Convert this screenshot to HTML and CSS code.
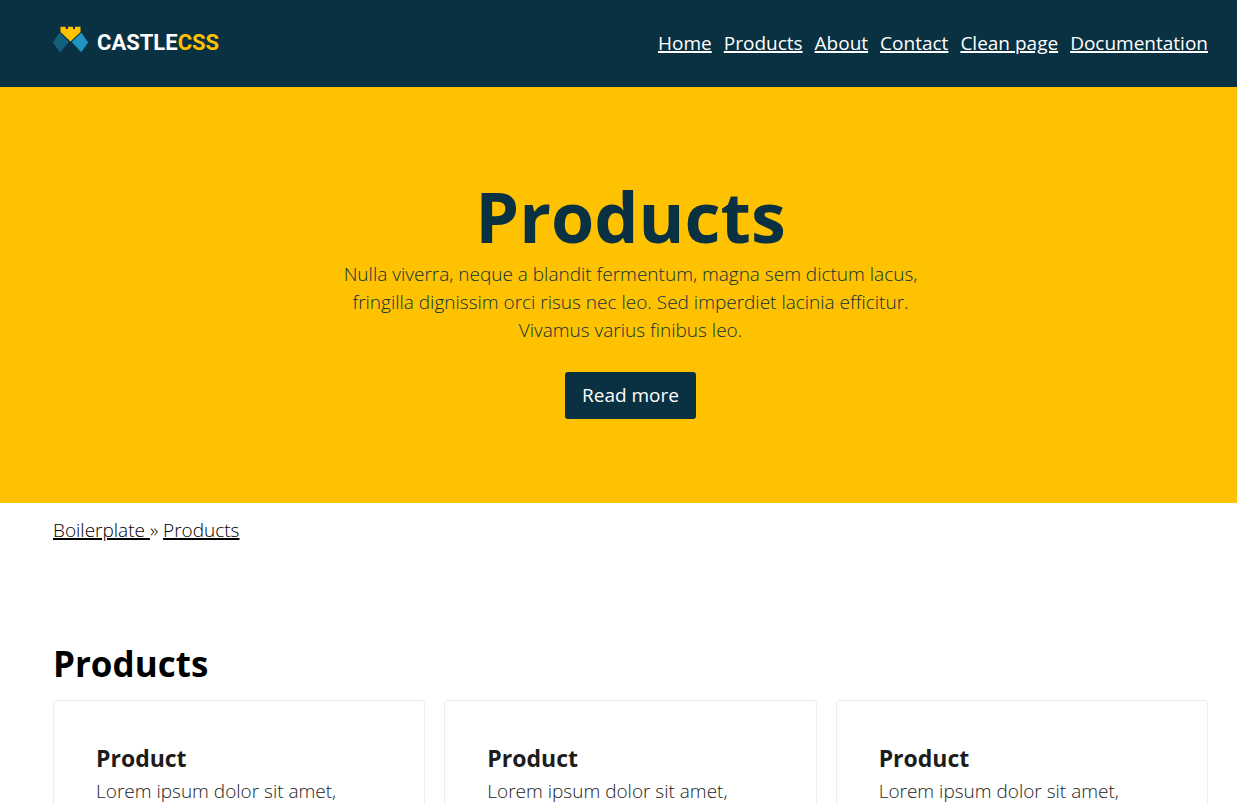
FILE: index.html
```html
<!DOCTYPE html>
<html lang="en">
<head>
<meta charset="utf-8">
<meta name="viewport" content="width=device-width, initial-scale=1">
<title>Products - CastleCSS</title>
<link rel="stylesheet" href="styles.css">
</head>
<body>
<header class="site-header container">
  <a class="logo" href="#" aria-label="CastleCSS home">
    <svg class="logo-mark" viewBox="0 0 36 28" aria-hidden="true">
      <path fill="#15607f" d="M6.500 6.500 16 16 7 26.300 0 16.500z"/>
      <path fill="#2094c2" d="M28.300 6.500 35.200 16.500 28.200 26.300 18.700 16z"/>
      <path fill="#ffc200" stroke="#0a3142" stroke-width="1" paint-order="stroke" d="M7.500.8h5.200V3H15V.8h5V3h2V.8h5.500V6l-10 9.500L7.500 6z"/>
    </svg>
    <span class="logo-name">CASTLE<span class="logo-accent">CSS</span></span>
  </a>
  <nav class="main-nav" aria-label="Main">
    <a href="#">Home</a>
    <a href="#">Products</a>
    <a href="#">About</a>
    <a href="#">Contact</a>
    <a href="#">Clean page</a>
    <a href="#">Documentation</a>
  </nav>
</header>
<main>
  <section class="hero container">
    <h1 class="hero-title">Products</h1>
    <p class="hero-text">Nulla viverra, neque a blandit fermentum, magna sem dictum lacus, fringilla dignissim orci risus nec leo. Sed imperdiet lacinia efficitur. Vivamus varius finibus leo.</p>
    <button class="button" type="button">Read more</button>
  </section>
  <nav class="breadcrumbs container" aria-label="Breadcrumb"><a href="#">Boilerplate </a>» <a href="#">Products</a></nav>
  <section class="products container">
    <h2 class="products-title">Products</h2>
    <div class="cards">
      <article class="card"><h3 class="card-title">Product</h3><p class="card-text">Lorem ipsum dolor sit amet,</p></article>
      <article class="card"><h3 class="card-title">Product</h3><p class="card-text">Lorem ipsum dolor sit amet,</p></article>
      <article class="card"><h3 class="card-title">Product</h3><p class="card-text">Lorem ipsum dolor sit amet,</p></article>
    </div>
  </section>
</main>
</body>
</html>
```
FILE: styles.css
```css
* {
  box-sizing: border-box;
}

html {
  overflow-x: hidden;
  scrollbar-width: none;
}

body {
  margin: 0;
  background: #fff;
  color: #000;
  font: 300 19px/28px "Open Sans", sans-serif;
}

h1, h2, h3, p {
  margin: 0;
}

a {
  color: inherit;
  text-decoration-thickness: 2px;
}

.container {
  padding-left: 53px;
  padding-right: 29px;
}

.site-header {
  display: flex;
  align-items: center;
  justify-content: space-between;
  min-height: 87px;
  padding-bottom: 2px;
  background: #0a3142;
  color: #fff;
}

.logo {
  display: flex;
  align-items: center;
  gap: 8px;
  text-decoration: none;
}

.logo-mark {
  width: 36px;
  height: 28px;
  margin-bottom: 5px;
}

.logo-name {
  font: 700 22px/28px "Roboto", sans-serif;
}

.logo-accent {
  color: #ffc200;
}

.main-nav {
  display: flex;
  flex-wrap: wrap;
  gap: 12px;
  font-weight: 400;
}

.hero {
  display: flex;
  flex-direction: column;
  align-items: center;
  padding-top: 86px;
  padding-bottom: 84px;
  background: #ffc200;
  color: #0a3142;
  text-align: center;
}

.hero-title {
  font-size: 70px;
  line-height: 87px;
  font-weight: 700;
}

.hero-text {
  max-width: 600px;
}

.button {
  margin-top: 28px;
  padding: 10px 17px;
  border: 0;
  border-radius: 3px;
  background: #0a3142;
  color: #fff;
  font: 400 19px/27px "Open Sans", sans-serif;
}

.breadcrumbs {
  padding-top: 13px;
}

.products {
  padding-top: 93px;
}

.products-title {
  font-size: 35px;
  line-height: 54px;
  font-weight: 700;
}

.cards {
  display: grid;
  grid-template-columns: repeat(3, 1fr);
  gap: 19px;
  padding-top: 9px;
}

.card {
  padding: 41px 42px 0;
  border: 1px solid #ededed;
  border-bottom: 0;
  border-radius: 4px 4px 0 0;
  color: #1c1c1c;
}

.card-title {
  margin-bottom: 2px;
  font-size: 23px;
  line-height: 33px;
  font-weight: 700;
}
```
